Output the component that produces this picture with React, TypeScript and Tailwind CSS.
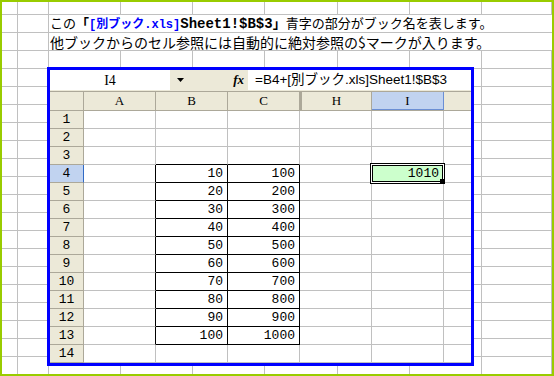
import React from "react";

const JP = "font-['Noto_Sans_CJK_JP',sans-serif]";
const MONO = "font-['Liberation_Mono','Noto_Sans_CJK_JP',monospace]";
const SERIF = "font-['Liberation_Serif',serif]";

// background sheet columns (right grid line of each)
const bgCols = ["w-[16px]", "w-[31px]", "w-[72px]", "w-[72px]", "w-[72px]", "w-[73px]", "w-[72px]", "w-[72px]", "flex-1"];
const bgRows = Array.from({ length: 21 }, (_, i) => i);

const colHeads = [
  { label: "A", cls: "w-[72px] border-r border-[#aca899]" },
  { label: "B", cls: "w-[72px] border-r border-[#aca899]" },
  { label: "C", cls: "w-[72px] border-r border-[#aca899]" },
  { label: "H", cls: "w-[72px] border-l-2 border-r border-l-[#aca899] border-r-[#aca899]" },
];

const rows = Array.from({ length: 14 }, (_, i) => i + 1);

function BackgroundSheet() {
  return (
    <div className="flex flex-col">
      {bgRows.map((r) => {
        const h = r === 0 ? "h-[13px]" : "h-[18px]";
        if (r === 1 || r === 2) {
          return (
            <div key={r} className={`flex shrink-0 ${h}`}>
              <div className="w-[16px] border-r border-b border-[#c0c0c0]" />
              <div className="w-[31px] border-r border-b border-[#c0c0c0]" />
              <div className="flex-1 border-b border-[#c0c0c0] pl-[1px] flex items-center whitespace-nowrap text-black">
                {r === 1 ? <FirstLine /> : <SecondLine />}
              </div>
            </div>
          );
        }
        return (
          <div key={r} className={`flex shrink-0 ${h}`}>
            {bgCols.map((c, i) => (
              <div key={i} className={`${c} border-r border-b border-[#c0c0c0]`} />
            ))}
          </div>
        );
      })}
    </div>
  );
}

function FirstLine() {
  return (
    <span className={`${JP} text-[13px] leading-none`}>
      この<span className="font-bold">「</span>
      <span className={`${MONO} font-bold text-[#0000ff] text-[12px]`}>[別ブック.xls]</span>
      <span className={`${MONO} font-bold text-[14px]`}>Sheet1!$B$3</span>
      <span className="font-bold">」</span>
      青字の部分がブック名を表します。
    </span>
  );
}

function SecondLine() {
  return (
    <span className={`${JP} text-[14px] leading-none`}>
      他ブックからのセル参照には自動的に絶対参照の$マークが入ります。
    </span>
  );
}

function FormulaBar() {
  return (
    <div className="h-[22px] shrink-0 flex bg-[#ece9d8] border-b border-[#aca899]">
      <div className={`w-[120px] h-[20px] bg-white flex items-center justify-center ${SERIF} text-[14px] text-black`}>
        I4
      </div>
      <div className="w-[20px] h-[20px] flex items-center justify-center">
        <svg width="7" height="4" viewBox="0 0 7 4">
          <polygon points="0,0 7,0 3.5,4" fill="#000" />
        </svg>
      </div>
      <div className="w-[58px] h-[20px] flex items-center justify-end pr-[4px]">
        <span className={`${SERIF} italic font-bold text-[13px] text-black`}>fx</span>
      </div>
      <div className="flex-1 h-[20px] bg-white pl-[7px] flex items-center whitespace-nowrap">
        <span className="font-['Liberation_Sans','Noto_Sans_CJK_JP',sans-serif] text-[13.5px] text-black">
          =B4+[別ブック.xls]Sheet1!$B$3
        </span>
      </div>
    </div>
  );
}

function HeaderRow() {
  return (
    <div className={`h-[19px] shrink-0 flex bg-[#ece9d8] border-b border-[#aca899] ${SERIF} text-[13px] text-black`}>
      <div className="w-[34px] border-r border-[#aca899]" />
      {colHeads.map((h) => (
        <div key={h.label} className={`${h.cls} flex items-center justify-center`}>
          {h.label}
        </div>
      ))}
      <div className="w-[72px] bg-[#c1d3f0] border-r border-b border-[#6b8fd4] flex items-center justify-center">
        I
      </div>
      <div className="flex-1" />
    </div>
  );
}

function DataRow({ r }: { r: number }) {
  const inBox = r >= 4 && r <= 13;
  const topOfBox = r >= 3 && r <= 13;
  const bc = `border-r border-b ${inBox ? "border-r-black" : "border-r-[#c0c0c0]"} ${topOfBox ? "border-b-black" : "border-b-[#c0c0c0]"}`;
  const num = `flex items-center justify-end pr-[4px] ${MONO} text-[13px] text-black`;
  return (
    <div className="h-[18px] shrink-0 flex">
      <div
        className={
          r === 4
            ? `w-[34px] bg-[#c1d3f0] border-r border-b border-r-[#316ac5] border-b-[#aca899] flex items-center justify-center ${MONO} text-[13px] text-black`
            : `w-[34px] bg-[#ece9d8] border-r border-b border-[#aca899] flex items-center justify-center ${MONO} text-[13px] text-black`
        }
      >
        {r}
      </div>
      <div className={`w-[72px] border-r border-b border-b-[#c0c0c0] ${inBox ? "border-r-black" : "border-r-[#c0c0c0]"}`} />
      <div className={`w-[72px] ${bc} ${num}`}>{inBox ? (r - 3) * 10 : ""}</div>
      <div className={`w-[72px] ${bc} ${num}`}>{inBox ? (r - 3) * 100 : ""}</div>
      <div className="w-[72px] border-r border-b border-[#c0c0c0]" />
      {r === 4 ? (
        <div className={`relative w-[72px] bg-[#ccffcc] border-r border-b border-[#c0c0c0] ${num}`}>
          1010
          <div className="absolute -left-[2px] -top-[2px] -right-[2px] -bottom-[2px] border border-black">
            <div className="h-full border border-white">
              <div className="h-full border border-black" />
            </div>
            <div className="absolute -right-[1px] -bottom-[1px] w-[5px] h-[5px] bg-black" />
          </div>
        </div>
      ) : (
        <div className="w-[72px] border-r border-b border-[#c0c0c0]" />
      )}
      <div className="flex-1 border-b border-[#c0c0c0]" />
    </div>
  );
}

function EmbeddedSheet() {
  return (
    <div className="absolute left-[45px] top-[65px] w-[427px] h-[299px] border-[3px] border-[#0000ff] bg-white flex flex-col overflow-hidden">
      <FormulaBar />
      <HeaderRow />
      {rows.map((r) => (
        <DataRow key={r} r={r} />
      ))}
    </div>
  );
}

export default function App() {
  return (
    <div className="relative w-[554px] h-[376px] border-2 border-[#99cc00] bg-white overflow-hidden">
      <BackgroundSheet />
      <EmbeddedSheet />
    </div>
  );
}
